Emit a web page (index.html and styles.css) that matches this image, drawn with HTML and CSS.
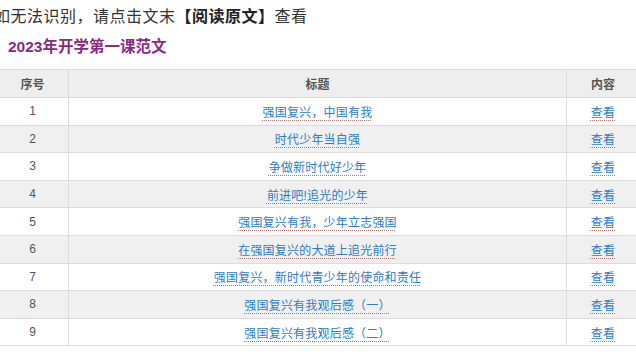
FILE: index.html
```html
<!DOCTYPE html>
<html lang="zh">
<head>
<meta charset="utf-8">
<link rel="stylesheet" href="styles.css">
</head>
<body>
<div class="page">
  <p class="notice">如无法识别，请点击文末<b>【阅读原文】</b>查看</p>
  <h2 class="title">2023年开学第一课范文</h2>
  <table class="list">
    <thead>
      <tr><th class="c-no">序号</th><th class="c-title">标题</th><th class="c-view">内容</th></tr>
    </thead>
    <tbody>
      <tr><td>1</td><td><a>强国复兴，中国有我</a></td><td><a>查看</a></td></tr>
      <tr><td>2</td><td><a>时代少年当自强</a></td><td><a>查看</a></td></tr>
      <tr><td>3</td><td><a>争做新时代好少年</a></td><td><a>查看</a></td></tr>
      <tr><td>4</td><td><a>前进吧!追光的少年</a></td><td><a>查看</a></td></tr>
      <tr><td>5</td><td><a>强国复兴有我，少年立志强国</a></td><td><a>查看</a></td></tr>
      <tr><td>6</td><td><a>在强国复兴的大道上追光前行</a></td><td><a>查看</a></td></tr>
      <tr><td>7</td><td><a>强国复兴，新时代青少年的使命和责任</a></td><td><a>查看</a></td></tr>
      <tr><td>8</td><td><a>强国复兴有我观后感（一）</a></td><td><a>查看</a></td></tr>
      <tr><td>9</td><td><a>强国复兴有我观后感（二）</a></td><td><a>查看</a></td></tr>
    </tbody>
  </table>
</div>
</body>
</html>
```

FILE: styles.css
```css
html, body {
  margin: 0;
  padding: 0;
  background: #fff;
  overflow: hidden;
}

.page {
  font-family: "Liberation Sans", "Noto Sans CJK SC", sans-serif;
  color: #333;
}

.notice {
  margin: 6px 0 0 -6px;
  font-size: 16px;
  line-height: 22px;
  letter-spacing: 0.5px;
  color: #333;
  white-space: nowrap;
}

.notice b {
  font-weight: bold;
  color: #222;
}

.title {
  margin: 9px 0 0 8px;
  font-size: 15.5px;
  line-height: 20px;
  font-weight: bold;
  color: #8a2a82;
}

.list {
  margin: 12px 0 0 -4px;
  width: 640px;
  border-collapse: collapse;
  table-layout: fixed;
  font-size: 12px;
}

.list th,
.list td {
  border: 1px solid #dcdcdc;
  text-align: center;
  vertical-align: middle;
  padding: 0;
  color: #555;
}

.list th {
  height: 27px;
  background: #eeeeee;
  font-weight: bold;
  color: #555;
}

.list td {
  height: 26.6px;
}

.c-no { width: 71px; }
.c-title { width: 497px; }
.c-view { width: 72px; }

.list tbody tr:nth-child(even) td {
  background: #f0f0f0;
}

.list a {
  color: #2d7cc4;
  letter-spacing: 0.2px;
  text-decoration: underline dotted #c0706a;
  text-underline-offset: 3px;
  text-decoration-thickness: 1px;
  cursor: pointer;
}
```
